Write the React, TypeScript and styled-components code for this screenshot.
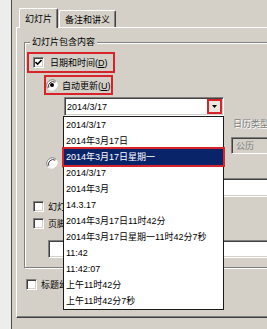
import React from 'react';
import styled, { createGlobalStyle } from 'styled-components';

const FONT = `"Liberation Sans", "Noto Sans CJK SC", sans-serif`;
const FACE = '#d4d0c8';
const RED = '#d8232a';

const Global = createGlobalStyle`
  html, body { margin: 0; padding: 0; background: ${FACE}; }
  body { width: 267px; height: 329px; overflow: hidden; }
  #root { width: 267px; height: 329px; }
`;

const Screen = styled.div`
  width: 267px;
  height: 329px;
  overflow: hidden;
  display: flex;
  background: ${FACE};
  font-family: ${FONT};
  font-size: 9px;
  color: #000;
`;

const Backdrop = styled.div`
  flex: 0 0 11px;
  background: #ededed;
  border-right: 1px solid #4a4a4a;
`;

const Dialog = styled.div`
  flex: 0 0 330px;
  padding: 8px 0 0 4px;
  display: flex;
  flex-direction: column;
`;

const TabStrip = styled.div`
  position: relative;
  z-index: 1;
  height: 20px;
  display: flex;
  align-items: flex-end;
  padding-left: 3px;
`;

const Tab = styled.div<{ $active?: boolean }>`
  box-sizing: border-box;
  height: ${(p) => (p.$active ? 20 : 17)}px;
  margin-bottom: ${(p) => (p.$active ? 0 : 1)}px;
  margin-left: ${(p) => (p.$active ? 0 : 1)}px;
  padding: 0 5px;
  display: flex;
  align-items: center;
  background: ${FACE};
  border-top: 1px solid #fff;
  border-left: 1px solid #fff;
  border-right: 1px solid #404040;
  box-shadow: inset -1px 0 #808080;
  border-radius: 2px 2px 0 0;
  white-space: nowrap;
`;

const Panel = styled.div`
  box-sizing: border-box;
  margin-top: -1px;
  height: 291px;
  border-top: 1px solid #fff;
  border-left: 1px solid #fff;
  border-bottom: 1px solid #404040;
  box-shadow: inset 0 -1px #808080;
  padding: 14px 0 0 7px;
  display: flex;
  flex-direction: column;
`;

const Group = styled.div`
  position: relative;
  box-sizing: border-box;
  width: 300px;
  height: 226px;
  border: 1px solid #808080;
  box-shadow: inset 1px 1px #fff, 1px 1px #fff;
  padding: 9px 0 0 2px;
  display: flex;
  flex-direction: column;
  align-items: flex-start;
`;

const Legend = styled.span`
  position: absolute;
  top: -6px;
  left: 5px;
  padding: 0 2px;
  line-height: 11px;
  background: ${FACE};
  white-space: nowrap;
`;

const MarkBox = styled.div<{ $w: number; $h: number; $ml?: number; $mt?: number; $pl?: number; $gap?: number }>`
  box-sizing: border-box;
  width: ${(p) => p.$w}px;
  height: ${(p) => p.$h}px;
  margin-left: ${(p) => p.$ml ?? 0}px;
  margin-top: ${(p) => p.$mt ?? 0}px;
  padding-left: ${(p) => p.$pl ?? 0}px;
  border: 2px solid ${RED};
  display: flex;
  align-items: center;
  gap: ${(p) => p.$gap ?? 4}px;
  white-space: nowrap;
`;

const OptionRow = styled.div<{ $ml?: number; $mt?: number; $h?: number; $gap?: number }>`
  height: ${(p) => p.$h ?? 13}px;
  margin-left: ${(p) => p.$ml ?? 0}px;
  margin-top: ${(p) => p.$mt ?? 0}px;
  display: flex;
  align-items: center;
  gap: ${(p) => p.$gap ?? 4}px;
  white-space: nowrap;
`;

const Key = styled.span`
  text-decoration: underline;
`;

const CheckBox = styled.span`
  box-sizing: border-box;
  flex: 0 0 11px;
  width: 11px;
  height: 11px;
  background: #fff;
  border: 1px solid;
  border-color: #808080 #fff #fff #808080;
  box-shadow: inset 1px 1px #404040, inset -1px -1px ${FACE};
  display: inline-flex;
  align-items: center;
  justify-content: center;
`;

const AutoArea = styled.div`
  display: flex;
  align-items: flex-start;
  margin: 2px 0 0 37px;
`;

const ComboWrap = styled.div`
  position: relative;
  width: 160px;
`;

const Combo = styled.div`
  box-sizing: border-box;
  height: 19px;
  background: #fff;
  border: 1px solid;
  border-color: #808080 #fff #fff #808080;
  box-shadow: inset 1px 1px #404040, inset -1px -1px ${FACE};
  display: flex;
  align-items: center;
  padding: 0 1px 0 1px;
`;

const ComboText = styled.span`
  flex: 1;
  padding-left: 1px;
`;

const DropButton = styled.span`
  box-sizing: border-box;
  width: 15px;
  height: 15px;
  border: 2px solid ${RED};
  background: #e9e7e2;
  display: flex;
  align-items: center;
  justify-content: center;
`;

const DropList = styled.div`
  position: absolute;
  z-index: 5;
  top: 100%;
  left: -1px;
  width: 161px;
  box-sizing: border-box;
  background: #fff;
  border: 1px solid #1a1a1a;
  display: flex;
  flex-direction: column;
`;

const ListItem = styled.div<{ $selected?: boolean }>`
  position: relative;
  height: 16px;
  line-height: 16px;
  padding-left: 2px;
  white-space: nowrap;
  overflow: hidden;
  background: ${(p) => (p.$selected ? '#0a246a' : 'transparent')};
  color: ${(p) => (p.$selected ? '#fff' : '#000')};
  outline: ${(p) => (p.$selected ? `2px solid ${RED}` : 'none')};
  z-index: ${(p) => (p.$selected ? 1 : 0)};
`;

const RightCol = styled.div`
  margin-left: 7px;
  display: flex;
  flex-direction: column;
`;

const DisabledLabel = styled.span`
  margin-top: 21px;
  padding-left: 2px;
  line-height: 12px;
  color: #808080;
  text-shadow: 1px 1px #fff;
  white-space: nowrap;
`;

const Field = styled.div<{ $w: number; $h: number; $ml?: number; $mt?: number; $disabled?: boolean }>`
  box-sizing: border-box;
  width: ${(p) => p.$w}px;
  height: ${(p) => p.$h}px;
  margin-left: ${(p) => p.$ml ?? 0}px;
  margin-top: ${(p) => p.$mt ?? 0}px;
  background: ${(p) => (p.$disabled ? FACE : '#fff')};
  color: ${(p) => (p.$disabled ? '#808080' : '#000')};
  border: 1px solid;
  border-color: #808080 #fff #fff #808080;
  box-shadow: inset 1px 1px #404040, inset -1px -1px ${FACE};
  display: flex;
  align-items: center;
  padding-left: 4px;
`;

const Check = () => (
  <svg width="7" height="7" viewBox="0 0 7 7">
    <path d="M0.5 3 L2.6 5.2 L6.5 1" fill="none" stroke="#000" strokeWidth="1.6" />
  </svg>
);

const Radio = ({ on }: { on?: boolean }) => (
  <svg width="12" height="12" viewBox="0 0 12 12" style={{ flex: '0 0 12px' }}>
    <circle cx="6" cy="6" r="5" fill="#fff" />
    <path d="M10.2 2.5 A5.5 5.5 0 0 0 1.8 9.5" fill="none" stroke="#808080" strokeWidth="1" />
    <path d="M9.2 3.2 A4.5 4.5 0 0 0 2.8 8.8" fill="none" stroke="#404040" strokeWidth="1" />
    <path d="M1.8 9.5 A5.5 5.5 0 0 0 10.2 2.5" fill="none" stroke="#fff" strokeWidth="1" />
    {on && <circle cx="6" cy="6" r="2" fill="#000" />}
  </svg>
);

const Triangle = () => (
  <svg width="5" height="3" viewBox="0 0 5 3">
    <path d="M0 0 H5 L2.5 3 Z" fill="#000" />
  </svg>
);

const items = [
  '2014/3/17',
  '2014年3月17日',
  '2014年3月17日星期一',
  '2014/3/17',
  '2014年3月',
  '14.3.17',
  '2014年3月17日11时42分',
  '2014年3月17日星期一11时42分7秒',
  '11:42',
  '11:42:07',
  '上午11时42分',
  '上午11时42分7秒',
];

export default function App() {
  return (
    <>
      <Global />
      <Screen>
        <Backdrop />
        <Dialog>
          <TabStrip>
            <Tab $active>幻灯片</Tab>
            <Tab>备注和讲义</Tab>
          </TabStrip>
          <Panel>
            <Group>
              <Legend>幻灯片包含内容</Legend>
              <MarkBox $w={88} $h={21} $pl={4} $gap={6}>
                <CheckBox>
                  <Check />
                </CheckBox>
                <span>
                  日期和时间(<Key>D</Key>)
                </span>
              </MarkBox>
              <MarkBox $w={69} $h={20} $ml={17} $mt={2} $pl={0} $gap={4}>
                <Radio on />
                <span>
                  自动更新(<Key>U</Key>)
                </span>
              </MarkBox>
              <AutoArea>
                <ComboWrap>
                  <Combo>
                    <ComboText>2014/3/17</ComboText>
                    <DropButton>
                      <Triangle />
                    </DropButton>
                  </Combo>
                  <DropList>
                    {items.map((t, i) => (
                      <ListItem key={i} $selected={i === 2}>
                        {t}
                      </ListItem>
                    ))}
                  </DropList>
                </ComboWrap>
                <RightCol>
                  <DisabledLabel>日历类型(C):</DisabledLabel>
                  <Field $w={100} $h={17} $mt={7} $disabled>
                    公历
                  </Field>
                </RightCol>
              </AutoArea>
              <OptionRow $ml={19} $mt={3} $h={12}>
                <Radio />
                <span>
                  固定(<Key>X</Key>)
                </span>
              </OptionRow>
              <Field $w={250} $h={19} $ml={37} $mt={9} />
              <OptionRow $ml={6} $mt={3}>
                <CheckBox />
                <span>
                  幻灯片编号(<Key>N</Key>)
                </span>
              </OptionRow>
              <OptionRow $ml={6} $mt={4}>
                <CheckBox />
                <span>
                  页脚(<Key>F</Key>)
                </span>
              </OptionRow>
              <Field $w={250} $h={18} $ml={21} $mt={10} />
            </Group>
            <OptionRow $ml={2} $mt={10}>
              <CheckBox />
              <span>
                标题幻灯片中不显示(<Key>S</Key>)
              </span>
            </OptionRow>
          </Panel>
        </Dialog>
      </Screen>
    </>
  );
}
